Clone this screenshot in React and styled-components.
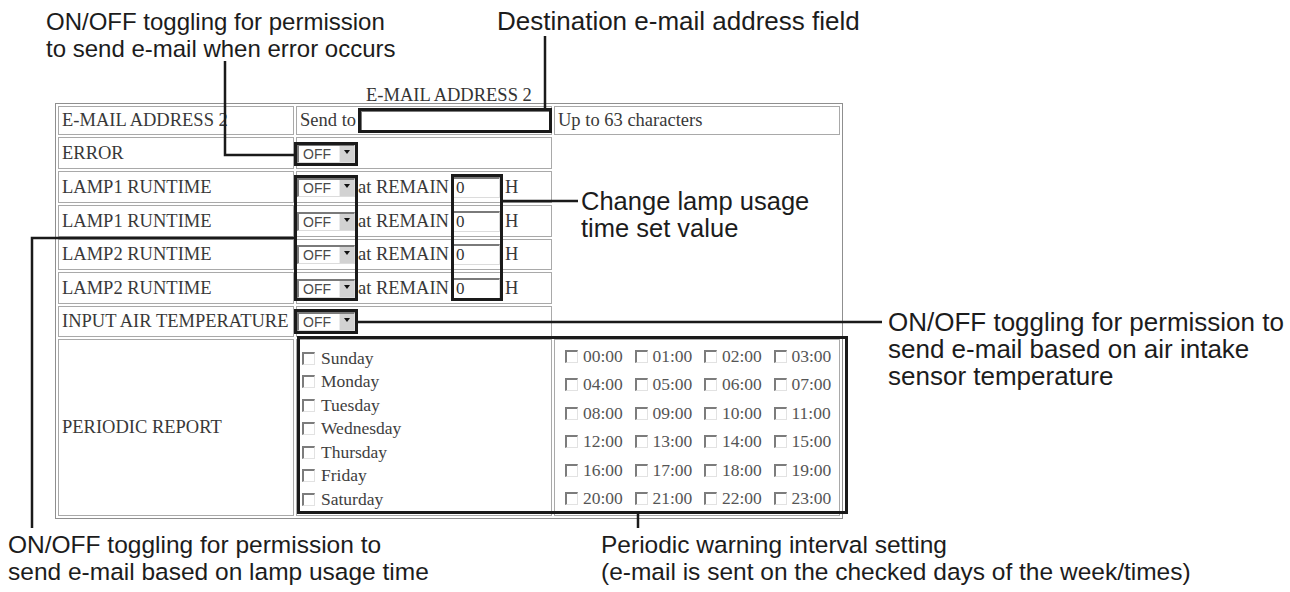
import React from 'react'
import styled, { createGlobalStyle } from 'styled-components'

const GlobalStyle = createGlobalStyle`
  html, body {
    margin: 0;
    padding: 0;
    background: #fff;
  }
`

const Canvas = styled.div`
  position: relative;
  width: 1290px;
  height: 592px;
  overflow: hidden;
  background: #fff;
`

const NoteRow = styled.div`
  display: flex;
  padding-left: ${({ $left }) => $left}px;
  padding-top: ${({ $top }) => $top || 0}px;
  margin-top: ${({ $mt }) => $mt || 0}px;
`

const Note = styled.div`
  flex: none;
  width: ${({ $w }) => ($w ? `${$w}px` : 'auto')};
  font-family: 'Liberation Sans', Arial, sans-serif;
  font-size: ${({ $size }) => $size || 26}px;
  line-height: 27px;
  color: #1c1c1c;
  white-space: nowrap;
`

const SideNote = styled(Note)`
  margin-left: 45px;
  margin-top: 221.5px;
`

const FloatNote = styled(Note)`
  position: absolute;
  left: ${({ $x }) => $x}px;
  top: ${({ $y }) => $y}px;
`

const Middle = styled.div`
  display: flex;
  align-items: flex-start;
  margin-top: 25px;
`

const TableBlock = styled.div`
  flex: none;
  margin-left: 55px;
`

const Caption = styled.div`
  padding-left: 311px;
  font-family: 'Liberation Serif', 'Times New Roman', serif;
  font-size: 18.5px;
  line-height: 16px;
  color: #333;
`

const Form = styled.table`
  width: 788px;
  table-layout: fixed;
  border: 1px solid #8f8f8f;
  border-spacing: 2px;
  font-family: 'Liberation Serif', 'Times New Roman', serif;
  font-size: 18.5px;
  color: #383838;
`

const Cell = styled.td`
  box-sizing: border-box;
  height: ${({ $h }) => $h}px;
  padding: 0 0 0 ${({ $pad }) => ($pad === undefined ? 3 : $pad)}px;
  border: 1px solid #a9a9a9;
  white-space: nowrap;
  vertical-align: middle;
  overflow: hidden;
`

const Line = styled.div`
  display: flex;
  align-items: center;
`

const Label = styled.span`
  margin: 0 ${({ $r }) => $r || 0}px 0 ${({ $l }) => $l || 0}px;
`

const TextBox = styled.input`
  box-sizing: border-box;
  width: ${({ $w }) => $w}px;
  height: ${({ $h }) => $h || 21}px;
  margin: 0;
  padding: 0 2px;
  border-top: 2px solid #7a7a7a;
  border-left: 2px solid #7a7a7a;
  border-right: 1px solid #dcdcdc;
  border-bottom: 1px solid #dcdcdc;
  background: #fff;
  font-family: 'Liberation Serif', 'Times New Roman', serif;
  font-size: 17px;
  color: #333;
  outline: none;
`

const Select = styled.span`
  box-sizing: border-box;
  display: inline-flex;
  width: 58px;
  height: 19px;
  border-top: 2px solid #7a7a7a;
  border-left: 2px solid #7a7a7a;
  border-right: 1px solid #dcdcdc;
  border-bottom: 1px solid #dcdcdc;
  background: #fff;
`

const SelectText = styled.span`
  flex: 1;
  padding-left: 4px;
  font-family: 'Liberation Sans', Arial, sans-serif;
  font-size: 14px;
  line-height: 16px;
  color: #4a4a4a;
`

const SelectButton = styled.span`
  width: 14px;
  display: flex;
  justify-content: center;
  background: #d2d2d2;
  border-left: 1px solid #ececec;

  &::after {
    content: '';
    margin-top: 4px;
    border-left: 3.5px solid transparent;
    border-right: 3.5px solid transparent;
    border-top: 4px solid #111;
  }
`

const DayList = styled.div`
  display: flex;
  flex-direction: column;
  padding: 2px 0 0 5px;
`

const TimeGrid = styled.div`
  display: grid;
  grid-template-columns: repeat(4, 69.5px);
  grid-auto-rows: 28.4px;
  padding-left: 10px;
`

const Option = styled.label`
  display: flex;
  align-items: center;
  gap: ${({ $gap }) => $gap}px;
  height: ${({ $h }) => ($h ? `${$h}px` : 'auto')};
  font-size: 17.5px;
  color: ${({ $muted }) => ($muted ? '#555' : '#404040')};
`

const Check = styled.span`
  box-sizing: border-box;
  flex: none;
  width: 13px;
  height: 13px;
  border-top: 2px solid #7c7c7c;
  border-left: 2px solid #7c7c7c;
  border-right: 1px solid #e2e2e2;
  border-bottom: 1px solid #e2e2e2;
  background: #fff;
`

const Overlay = styled.svg`
  position: absolute;
  top: 0;
  left: 0;
  pointer-events: none;
`

const days = ['Sunday', 'Monday', 'Tuesday', 'Wednesday', 'Thursday', 'Friday', 'Saturday']
const hours = Array.from({ length: 24 }, (_, i) => `${String(i).padStart(2, '0')}:00`)
const lampRows = ['LAMP1 RUNTIME', 'LAMP1 RUNTIME', 'LAMP2 RUNTIME', 'LAMP2 RUNTIME']
const lampHeights = [32, 32, 31, 32]

const OffSelect = () => (
  <Select>
    <SelectText>OFF</SelectText>
    <SelectButton />
  </Select>
)

// callout boxes and leader lines drawn over the form
const boxes = [
  [358, 108, 552, 133],
  [294, 142, 358, 166],
  [294, 175, 358, 301],
  [451, 174, 503, 301],
  [294, 309, 358, 334],
  [297, 336, 848, 514],
]

const leaders = [
  '225,61 225,155 294,155',
  '545,36 545,108',
  '503,201 578,201',
  '32,528 32,238 294,238',
  '358,322 882,322',
  '638,514 638,528',
]

const App = () => (
  <Canvas>
    <GlobalStyle />
    <NoteRow $left={46} $top={8}>
      <Note $w={451} $size={24}>
        ON/OFF toggling for permission
        <br />
        to send e-mail when error occurs
      </Note>
      <Note>Destination e-mail address field</Note>
    </NoteRow>

    <Middle>
      <TableBlock>
        <Caption>E-MAIL ADDRESS 2</Caption>
        <Form>
          <colgroup>
            <col style={{ width: 236 }} />
            <col style={{ width: 256 }} />
            <col style={{ width: 286 }} />
          </colgroup>
          <tbody>
            <tr>
              <Cell $h={29}>E-MAIL ADDRESS 2</Cell>
              <Cell $h={29} $pad={1}>
                <Line>
                  <Label $l={2} $r={4}>Send to</Label>
                  <TextBox $w={190} $h={22} defaultValue='' readOnly />
                </Line>
              </Cell>
              <Cell $h={29}>Up to 63 characters</Cell>
            </tr>
            <tr>
              <Cell $h={32}>ERROR</Cell>
              <Cell $h={32} $pad={0}>
                <Line>
                  <OffSelect />
                </Line>
              </Cell>
            </tr>
            {lampRows.map((name, i) => (
              <tr key={i}>
                <Cell $h={lampHeights[i]}>{name}</Cell>
                <Cell $h={lampHeights[i]} $pad={0}>
                  <Line>
                    <OffSelect />
                    <Label $l={3} $r={3}>at REMAIN</Label>
                    <TextBox $w={48} defaultValue='0' readOnly />
                    <Label $l={5}>H</Label>
                  </Line>
                </Cell>
              </tr>
            ))}
            <tr>
              <Cell $h={31}>INPUT AIR TEMPERATURE</Cell>
              <Cell $h={31} $pad={0}>
                <Line>
                  <OffSelect />
                </Line>
              </Cell>
            </tr>
            <tr>
              <Cell $h={177}>PERIODIC REPORT</Cell>
              <Cell $h={177} $pad={0}>
                <DayList>
                  {days.map((d) => (
                    <Option key={d} $gap={6} $h={23.5}>
                      <Check />
                      {d}
                    </Option>
                  ))}
                </DayList>
              </Cell>
              <Cell $h={177} $pad={0}>
                <TimeGrid>
                  {hours.map((h) => (
                    <Option key={h} $gap={5} $muted>
                      <Check />
                      {h}
                    </Option>
                  ))}
                </TimeGrid>
              </Cell>
            </tr>
          </tbody>
        </Form>
      </TableBlock>
      <SideNote>
        ON/OFF toggling for permission to
        <br />
        send e-mail based on air intake
        <br />
        sensor temperature
      </SideNote>
    </Middle>

    <FloatNote $x={581} $y={187.5} $size={25.5}>
      Change lamp usage
      <br />
      time set value
    </FloatNote>

    <NoteRow $left={8} $mt={11.5}>
      <Note $w={593} $size={24.5}>
        ON/OFF toggling for permission to
        <br />
        send e-mail based on lamp usage time
      </Note>
      <Note $size={24.5}>
        Periodic warning interval setting
        <br />
        (e-mail is sent on the checked days of the week/times)
      </Note>
    </NoteRow>

    <Overlay width='1290' height='592' viewBox='0 0 1290 592'>
      <g fill='none' stroke='#1a1a1a' strokeWidth='3'>
        {boxes.map(([x1, y1, x2, y2], i) => (
          <rect key={i} x={x1 + 1.5} y={y1 + 1.5} width={x2 - x1 - 3} height={y2 - y1 - 3} />
        ))}
      </g>
      <g fill='none' stroke='#1a1a1a' strokeWidth='2.5'>
        {leaders.map((pts, i) => (
          <polyline key={i} points={pts} />
        ))}
      </g>
    </Overlay>
  </Canvas>
)

export default App
